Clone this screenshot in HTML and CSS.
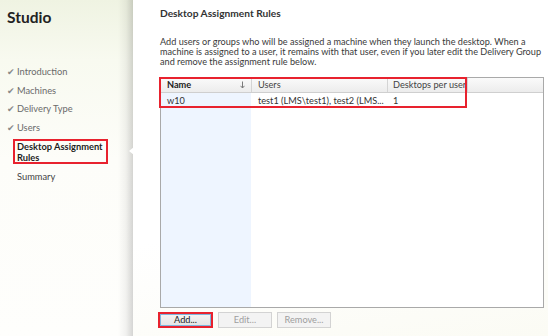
FILE: index.html
```html
<!DOCTYPE html>
<html>
<head>
<meta charset="utf-8">
<link rel="stylesheet" href="styles.css">
</head>
<body>
<div class="app">
  <aside class="sidebar">
    <div class="brand">Studio</div>
    <ul class="steps">
      <li class="step done"><span class="check">✔</span>Introduction</li>
      <li class="step done"><span class="check">✔</span>Machines</li>
      <li class="step done"><span class="check">✔</span>Delivery Type</li>
      <li class="step done"><span class="check">✔</span>Users</li>
      <li class="step current">Desktop Assignment Rules</li>
      <li class="step todo">Summary</li>
    </ul>
  </aside>
  <main class="panel">
    <h1 class="title">Desktop Assignment Rules</h1>
    <p class="desc">Add users or groups who will be assigned a machine when they launch the desktop. When a<br>machine is assigned to a user, it remains with that user, even if you later edit the Delivery Group<br>and remove the assignment rule below.</p>
    <div class="grid-wrap">
      <div class="grid">
        <div class="row head">
          <div class="cell c-name">Name<svg class="sort" width="5" height="8" viewBox="0 0 5 8"><path d="M2.5 0.5V7M0.5 4.8L2.5 7L4.5 4.8" fill="none" stroke="#7a7a7a" stroke-width="1"/></svg></div>
          <div class="cell c-users">Users</div>
          <div class="cell c-count">Desktops per user</div>
          <div class="cell c-fill"></div>
        </div>
        <div class="row">
          <div class="cell c-name">w10</div>
          <div class="cell c-users">test1 (LMS\test1), test2 (LMS...</div>
          <div class="cell c-count">1</div>
          <div class="cell c-fill"></div>
        </div>
      </div>
      <div class="mark"></div>
    </div>
    <div class="actions">
      <button class="btn primary">Add...</button>
      <button class="btn" disabled>Edit...</button>
      <button class="btn" disabled>Remove...</button>
    </div>
  </main>
</div>
</body>
</html>
```
FILE: styles.css
```css
* { box-sizing: border-box; }
html, body { margin: 0; padding: 0; }
body {
  width: 548px;
  height: 336px;
  overflow: hidden;
  font-family: Lato, "Open Sans", sans-serif;
  color: #333;
}
.app {
  display: flex;
  height: 336px;
}
.sidebar {
  width: 133px;
  flex: none;
  background:
    linear-gradient(to right, rgba(0,0,0,0) 118px, rgba(0,0,0,0.05) 126px, rgba(0,0,0,0.16) 133px),
    linear-gradient(to bottom, #eff3e2 0px, #f8faf0 60px, #fdfdf9 160px, #fefefc 100%);
}
.brand {
  margin: 7px 0 0 7px;
  font-size: 15.5px;
  font-weight: 700;
  line-height: 20px;
  color: #222;
}
.steps {
  list-style: none;
  margin: 36px 0 0;
  padding: 0;
}
.step {
  height: 18.6px;
  line-height: 18.6px;
  font-size: 9.3px;
  color: #6a6a6a;
  padding-left: 7px;
  display: flex;
  align-items: center;
}
.check {
  width: 10px;
  font-size: 9px;
  color: #8a8a8a;
}
.step.current {
  margin: 1.6px 0 0 13px;
  width: 95px;
  height: 25px;
  padding: 0 0 0 2px;
  border: 2px solid #e8222e;
  font-weight: 700;
  color: #1e1e1e;
  line-height: 11.5px;
  display: block;
}
.step.todo {
  margin-top: 4px;
  padding-left: 17px;
  color: #444;
}
.panel {
  flex: 1;
  position: relative;
  padding-left: 27px;
  background: linear-gradient(170deg, #ffffff 0%, #ffffff 60%, #fbfbf4 100%);
}
.panel::before {
  content: "";
  position: absolute;
  left: -4px;
  top: 147px;
  border-right: 5px solid #ffffff;
  border-top: 4.5px solid transparent;
  border-bottom: 4.5px solid transparent;
}
.title {
  margin: 6px 0 0;
  font-size: 10.2px;
  font-weight: 700;
  line-height: 14px;
  color: #333;
}
.desc {
  margin: 16.7px 0 0;
  font-size: 9.15px;
  line-height: 10px;
  color: #3a3a3a;
  white-space: nowrap;
}
.grid-wrap {
  position: relative;
  margin-top: 10.3px;
  width: 384px;
  height: 231px;
}
.grid {
  width: 100%;
  height: 100%;
  border: 1px solid #a9a9a9;
  background: linear-gradient(to right, #eef5ff 90px, #ffffff 90px);
}
.row {
  display: flex;
  height: 15px;
  font-size: 9.2px;
  line-height: 15px;
  color: #333;
}
.row.head {
  height: 15px;
  background: linear-gradient(to bottom, #fafafa, #ececec);
  border-bottom: 1px solid #cfcfcf;
  line-height: 14px;
}
.row:not(.head) { height: 16px; line-height: 16px; }
.cell {
  padding-left: 6px;
  white-space: nowrap;
  overflow: hidden;
  position: relative;
}
.head .cell { border-right: 1px solid #d4d4d4; color: #444; }
.c-name { width: 91px; }
.head .c-name { font-weight: 700; color: #222; }
.c-users { width: 136px; }
.c-count { width: 80px; padding-left: 5px; }
.c-fill { flex: 1; }
.head .c-fill { border-right: none; }
.sort {
  position: absolute;
  right: 6px;
  top: 3px;
}
.mark {
  position: absolute;
  left: -1px;
  top: 0;
  width: 308px;
  height: 31px;
  border: 2px solid #e8222e;
}
.actions {
  display: flex;
  gap: 5px;
  margin-top: 4px;
  margin-left: -2px;
}
.btn {
  height: 16px;
  width: 55px;
  padding: 0;
  font-family: inherit;
  font-size: 9.2px;
  color: #222;
  border: 1px solid #a6a6a6;
  background: linear-gradient(to bottom, #f4f4f4, #e4e4e4);
  border-radius: 0;
}
.btn[disabled] {
  color: #9e9e9e;
  border-color: #d3d3d3;
  background: #f3f3f3;
}
.btn + .btn { width: 54px; }
.btn.primary {
  border: 2px solid #e8222e;
  box-shadow: inset 0 0 0 1px #7fb7dd;
}
```
